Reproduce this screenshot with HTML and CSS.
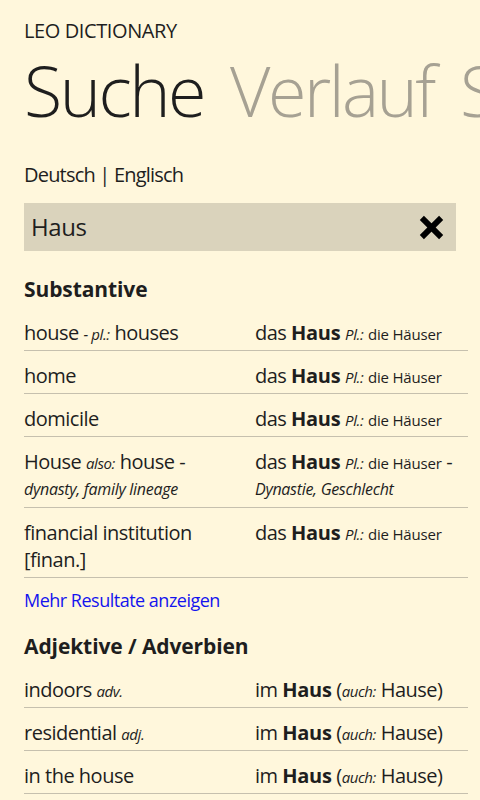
FILE: index.html
```html
<!DOCTYPE html>
<html lang="de">
<head>
<meta charset="utf-8">
<title>LEO Dictionary</title>
<link rel="stylesheet" href="styles.css">
</head>
<body>
<div class="page">
  <div class="app-title">LEO DICTIONARY</div>
  <nav class="pivot">
    <span class="pivot-item active">Suche</span>
    <span class="pivot-item">Verlauf</span>
    <span class="pivot-item">Stichwörter</span>
  </nav>
  <div class="lang">Deutsch | Englisch</div>
  <div class="search">
    <span class="search-text">Haus</span>
    <svg class="clear-icon" viewBox="0 0 28 28" width="28" height="28" aria-hidden="true">
      <path d="M4 4 L24 24 M24 4 L4 24" stroke="#000" stroke-width="6" stroke-linecap="butt" fill="none"/>
    </svg>
  </div>

  <section class="group">
    <h2 class="group-title">Substantive</h2>
    <div class="row">
      <div class="cell">house <i class="tag">- pl.:</i> houses</div>
      <div class="cell">das <b>Haus</b> <i class="tag">Pl.:</i> <span class="small">die Häuser</span></div>
    </div>
    <div class="row">
      <div class="cell">home</div>
      <div class="cell">das <b>Haus</b> <i class="tag">Pl.:</i> <span class="small">die Häuser</span></div>
    </div>
    <div class="row">
      <div class="cell">domicile</div>
      <div class="cell">das <b>Haus</b> <i class="tag">Pl.:</i> <span class="small">die Häuser</span></div>
    </div>
    <div class="row">
      <div class="cell">House <i class="tag">also:</i> house -<div class="sub">dynasty, family lineage</div></div>
      <div class="cell">das <b>Haus</b> <i class="tag">Pl.:</i> <span class="small">die Häuser</span> -<div class="sub">Dynastie, Geschlecht</div></div>
    </div>
    <div class="row">
      <div class="cell">financial institution [finan.]</div>
      <div class="cell">das <b>Haus</b> <i class="tag">Pl.:</i> <span class="small">die Häuser</span></div>
    </div>
  </section>

  <a class="more" href="#">Mehr Resultate anzeigen</a>

  <section class="group">
    <h2 class="group-title">Adjektive / Adverbien</h2>
    <div class="row">
      <div class="cell">indoors <i class="tag">adv.</i></div>
      <div class="cell">im <b>Haus</b> (<i class="tag">auch:</i> Hause)</div>
    </div>
    <div class="row">
      <div class="cell">residential <i class="tag">adj.</i></div>
      <div class="cell">im <b>Haus</b> (<i class="tag">auch:</i> Hause)</div>
    </div>
    <div class="row">
      <div class="cell">in the house</div>
      <div class="cell">im <b>Haus</b> (<i class="tag">auch:</i> Hause)</div>
    </div>
  </section>
</div>
</body>
</html>
```

FILE: styles.css
```css
html, body {
  margin: 0;
  padding: 0;
  background: #fff7dc;
}

body {
  width: 480px;
  height: 800px;
  overflow: hidden;
  font-family: "Open Sans", "Noto Sans", sans-serif;
  color: #1e1e1e;
}

.page {
  display: flex;
  flex-direction: column;
  padding: 19px 12px 0 24px;
}

.app-title {
  font-size: 20px;
  line-height: 24px;
  letter-spacing: -0.4px;
}

.pivot {
  display: flex;
  gap: 26px;
  margin: 0 -12px 0 0;
  white-space: nowrap;
  overflow: hidden;
  font-size: 70px;
  font-weight: 300;
  line-height: 94px;
  letter-spacing: -2.5px;
}

.pivot-item {
  color: #a6a193;
}

.pivot-item.active {
  color: #1e1e1e;
}

.lang {
  margin-top: 26px;
  font-size: 20px;
  line-height: 24px;
  letter-spacing: -0.8px;
}

.search {
  display: flex;
  align-items: center;
  justify-content: space-between;
  height: 48px;
  margin: 16px 12px 0 0;
  padding: 0 11px 0 7px;
  background: #dad3bc;
}

.search-text {
  font-size: 24px;
  line-height: 48px;
  letter-spacing: -0.4px;
}

.clear-icon {
  display: block;
  width: 27px;
  height: 27px;
}

.group {
  display: flex;
  flex-direction: column;
}

.group-title {
  margin: 25px 0 5px;
  font-size: 21px;
  font-weight: 700;
  line-height: 27px;
  letter-spacing: -0.1px;
}

.row {
  display: grid;
  grid-template-columns: 231px 1fr;
  padding: 11px 0 4px;
  border-bottom: 1px solid #c6c0ae;
}

.cell {
  font-size: 20px;
  line-height: 27px;
  letter-spacing: -0.5px;
  padding-right: 8px;
}

.cell b {
  font-weight: 700;
  letter-spacing: -0.3px;
  line-height: 1;
}

.tag {
  font-size: 15px;
  line-height: 1;
  letter-spacing: -0.4px;
}

.small {
  font-size: 15px;
  line-height: 1;
  letter-spacing: -0.2px;
}

.sub {
  font-size: 16px;
  font-style: italic;
  line-height: 28px;
  letter-spacing: -0.3px;
}

.more {
  margin-top: 9px;
  font-size: 18px;
  line-height: 26px;
  color: #1414ee;
  text-decoration: none;
  letter-spacing: -0.5px;
  align-self: flex-start;
}

.more + .group .group-title {
  margin-top: 20px;
}
```
